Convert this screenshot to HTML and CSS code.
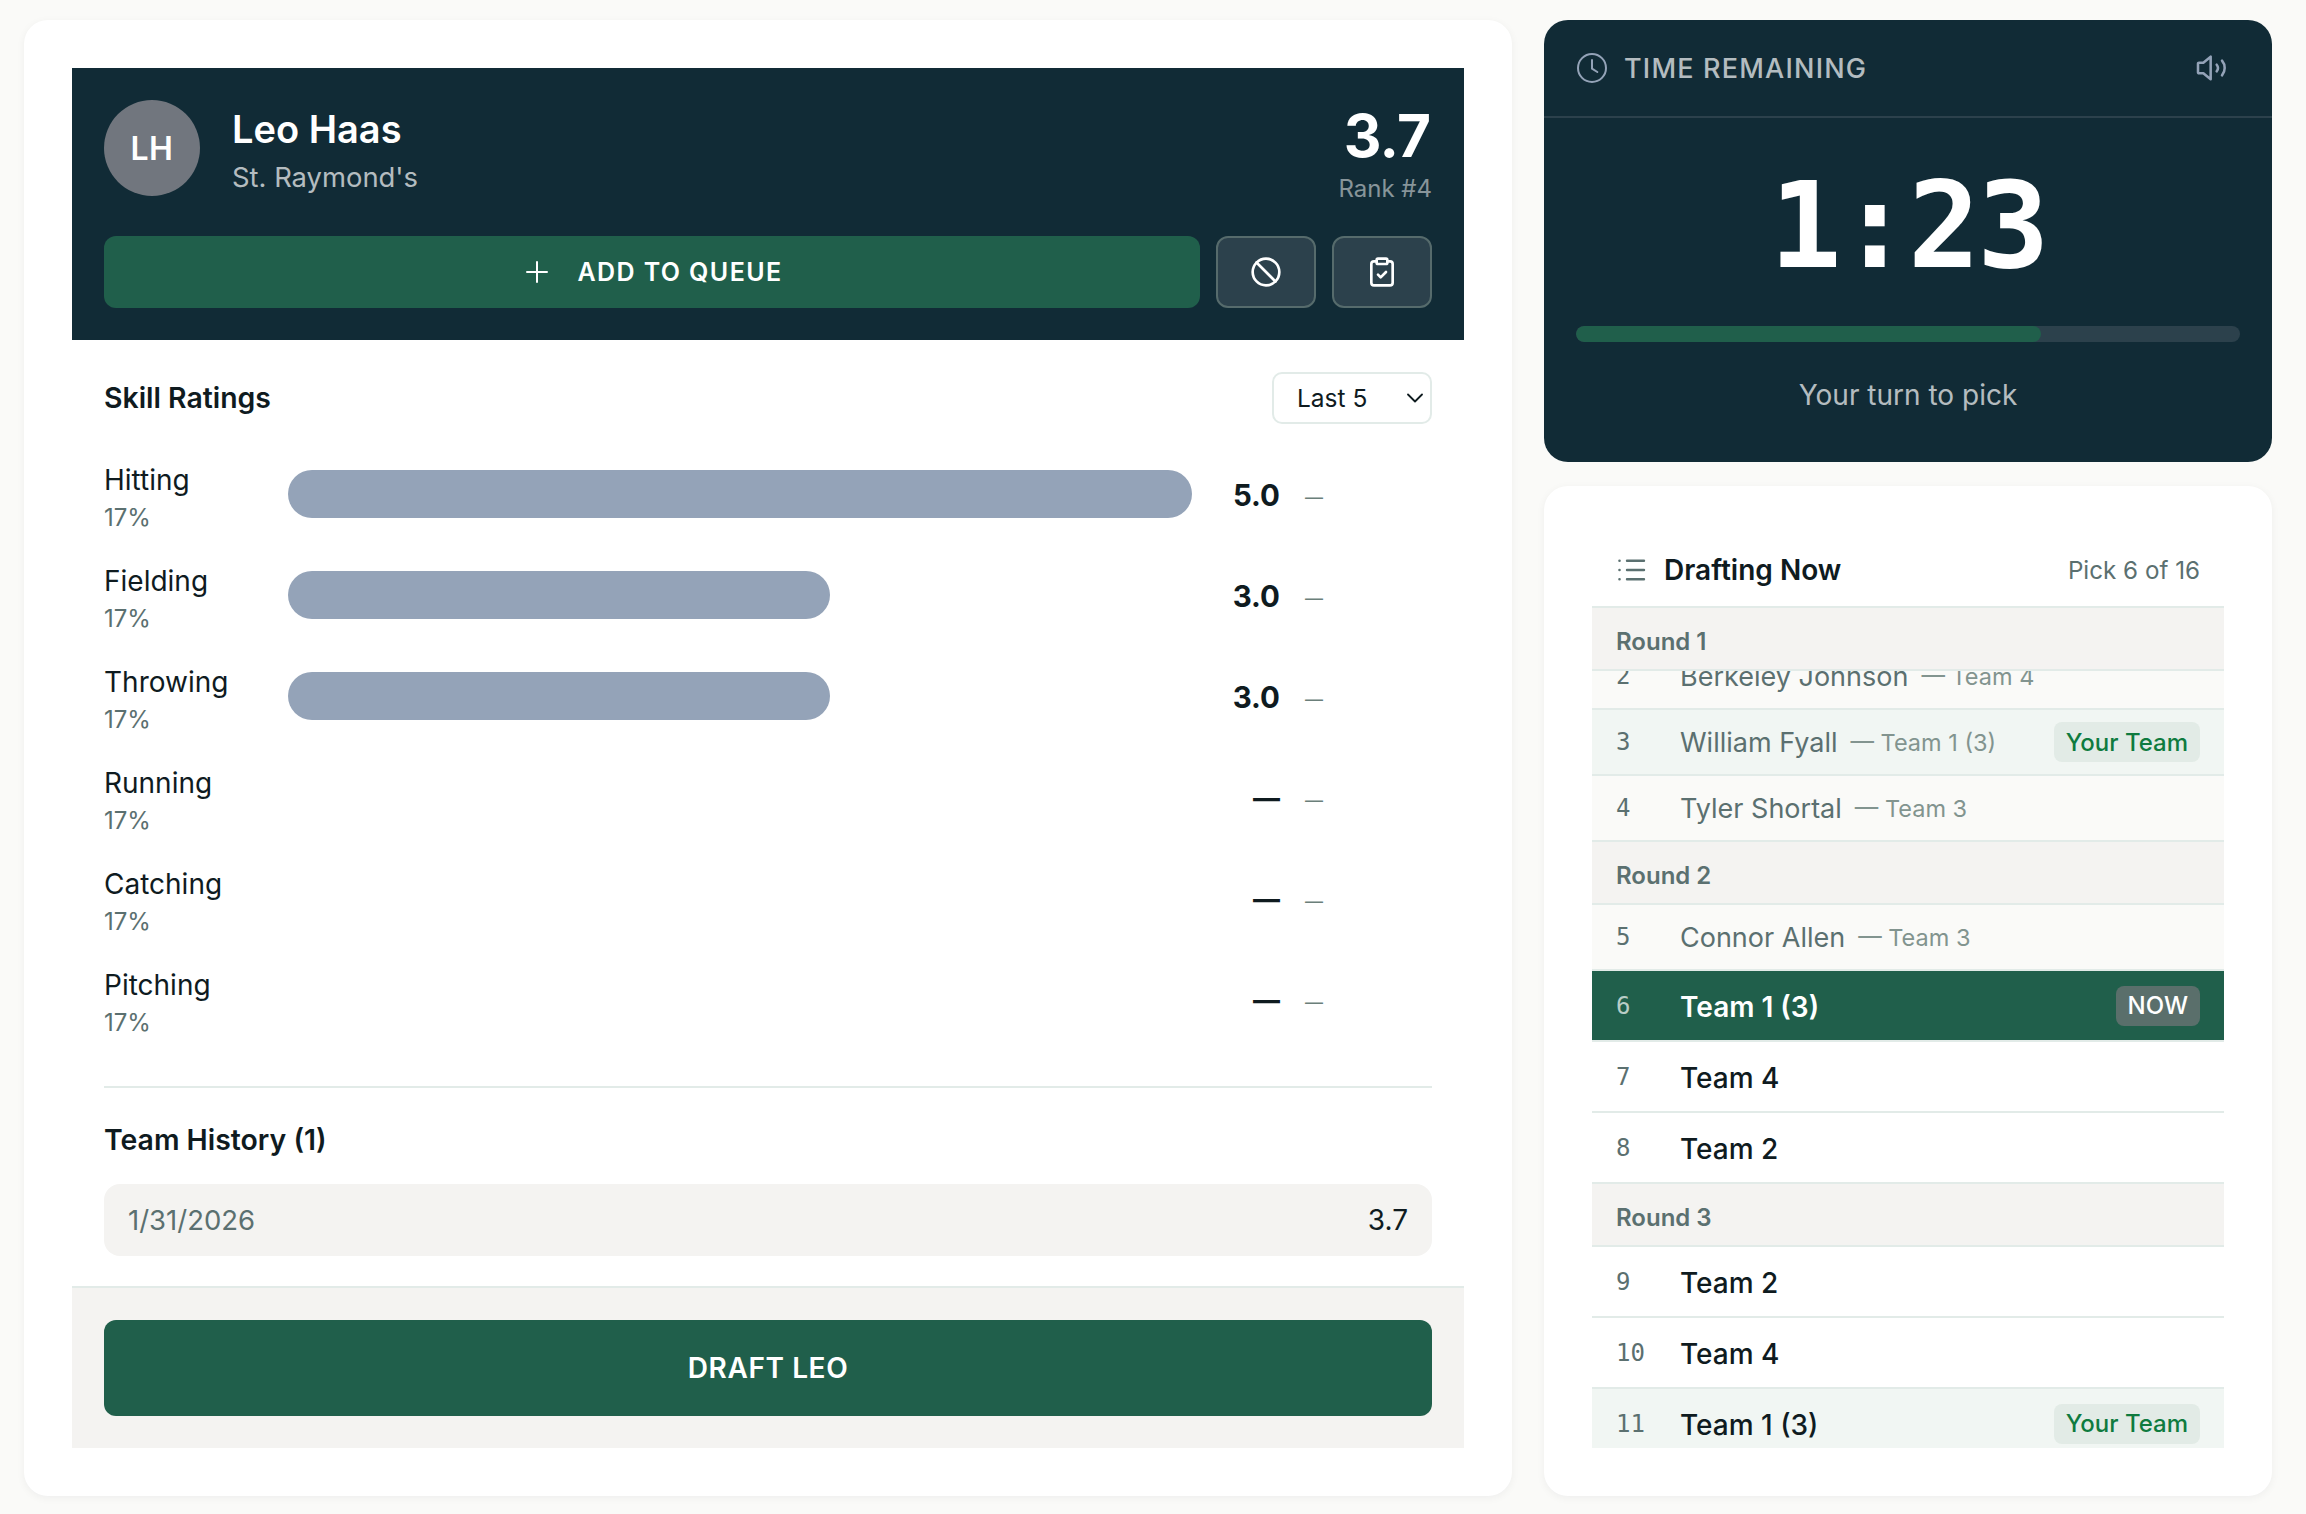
FILE: index.html
```html
<!DOCTYPE html>
<html lang="en">
<head>
<meta charset="utf-8">
<title>Draft Room</title>
<link rel="stylesheet" href="styles.css">
</head>
<body>
<main class="layout">
  <section class="card player-card">
    <header class="player-head">
      <div class="player-top">
        <div class="avatar">LH</div>
        <div class="player-id">
          <h1 class="player-name">Leo Haas</h1>
          <p class="player-school">St. Raymond's</p>
        </div>
        <div class="player-score">
          <div class="score-big">3.7</div>
          <div class="score-rank">Rank #4</div>
        </div>
      </div>
      <div class="player-actions">
        <button class="btn-queue">
          <svg class="icon-plus" viewBox="0 0 24 24" fill="none" stroke="currentColor" stroke-width="1.5" stroke-linecap="round"><path d="M12 4.500v15M4.500 12h15"/></svg>
          <span>ADD TO QUEUE</span>
        </button>
        <button class="btn-icon" aria-label="Do not draft">
          <svg class="icon-32" viewBox="0 0 24 24" fill="none" stroke="currentColor" stroke-width="2" stroke-linecap="round"><circle cx="12" cy="12" r="10"/><path d="m4.900 4.900 14.200 14.200"/></svg>
        </button>
        <button class="btn-icon" aria-label="Notes">
          <svg class="icon-32" viewBox="0 0 24 24" fill="none" stroke="currentColor" stroke-width="2" stroke-linecap="round" stroke-linejoin="round"><rect width="8" height="4" x="8" y="2" rx="1" ry="1"/><path d="M16 4h2a2 2 0 0 1 2 2v14a2 2 0 0 1-2 2H6a2 2 0 0 1-2-2V6a2 2 0 0 1 2-2h2"/><path d="m9 14 2 2 4-4"/></svg>
        </button>
      </div>
    </header>

    <div class="player-body">
      <div class="section-head">
        <h2 class="section-title">Skill Ratings</h2>
        <div class="select">
          <span>Last 5</span>
          <svg class="icon-chevron" viewBox="0 0 16 10" fill="none" stroke="currentColor" stroke-width="1.8" stroke-linecap="round" stroke-linejoin="round"><path d="M1 1.500l7 7 7-7"/></svg>
        </div>
      </div>

      <div class="skills">
        <div class="skill">
          <div class="skill-label"><div class="skill-name">Hitting</div><div class="skill-pct">17%</div></div>
          <div class="skill-track"><div class="skill-bar" style="width:100%"></div></div>
          <div class="skill-score">5.0</div>
          <div class="skill-trend">—</div>
        </div>
        <div class="skill">
          <div class="skill-label"><div class="skill-name">Fielding</div><div class="skill-pct">17%</div></div>
          <div class="skill-track"><div class="skill-bar" style="width:60%"></div></div>
          <div class="skill-score">3.0</div>
          <div class="skill-trend">—</div>
        </div>
        <div class="skill">
          <div class="skill-label"><div class="skill-name">Throwing</div><div class="skill-pct">17%</div></div>
          <div class="skill-track"><div class="skill-bar" style="width:60%"></div></div>
          <div class="skill-score">3.0</div>
          <div class="skill-trend">—</div>
        </div>
        <div class="skill">
          <div class="skill-label"><div class="skill-name">Running</div><div class="skill-pct">17%</div></div>
          <div class="skill-track"></div>
          <div class="skill-score skill-score-empty">—</div>
          <div class="skill-trend">—</div>
        </div>
        <div class="skill">
          <div class="skill-label"><div class="skill-name">Catching</div><div class="skill-pct">17%</div></div>
          <div class="skill-track"></div>
          <div class="skill-score skill-score-empty">—</div>
          <div class="skill-trend">—</div>
        </div>
        <div class="skill">
          <div class="skill-label"><div class="skill-name">Pitching</div><div class="skill-pct">17%</div></div>
          <div class="skill-track"></div>
          <div class="skill-score skill-score-empty">—</div>
          <div class="skill-trend">—</div>
        </div>
      </div>

      <div class="history">
        <h2 class="section-title">Team History (1)</h2>
        <div class="history-row">
          <span class="history-date">1/31/2026</span>
          <span class="history-val">3.7</span>
        </div>
      </div>
    </div>

    <footer class="player-foot">
      <button class="btn-draft">DRAFT LEO</button>
    </footer>
  </section>

  <aside class="side">
    <section class="timer">
      <div class="timer-head">
        <svg class="icon-clock" viewBox="0 0 24 24" fill="none" stroke="currentColor" stroke-width="1.500" stroke-linecap="round" stroke-linejoin="round"><circle cx="12" cy="12" r="10.500"/><path d="M12 6v6.500l4 2.500"/></svg>
        <span class="timer-label">TIME REMAINING</span>
        <svg class="icon-sound" viewBox="0 0 24 24" fill="none" stroke="currentColor" stroke-width="1.900" stroke-linecap="round" stroke-linejoin="round"><path d="M11 3.500v17l-5.500-4.500H2.200a.7.7 0 0 1-.7-.7V8.700a.7.7 0 0 1 .7-.7H5.500z"/><path d="M15.500 9.500a4 4 0 0 1 0 5"/><path d="M19.500 6.500a8.500 8.500 0 0 1 0 11"/></svg>
      </div>
      <div class="timer-body">
        <div class="timer-clock">1:23</div>
        <div class="timer-track"><div class="timer-fill" style="width:70%"></div></div>
        <div class="timer-note">Your turn to pick</div>
      </div>
    </section>

    <section class="card draft-card">
      <div class="draft-head">
        <svg class="icon-list" viewBox="0 0 30 24" fill="none" stroke="currentColor" stroke-width="2.400" stroke-linecap="round"><path d="M11 2.750h17M11 12h17M11 21.250h17"/><path d="M3.500 2.750h.01M3.500 12h.01M3.500 21.250h.01" stroke-width="2.600"/></svg>
        <h2 class="draft-title">Drafting Now</h2>
        <span class="draft-count">Pick 6 of 16</span>
      </div>
      <div class="draft-list">
        <div class="round">Round 1</div>
        <div class="pick pick-done pick-scrolled"><span class="pick-num">2</span><span class="pick-name">Berkeley Johnson</span><span class="pick-team">— Team 4</span></div>
        <div class="pick pick-done pick-mine"><span class="pick-num">3</span><span class="pick-name">William Fyall</span><span class="pick-team">— Team 1 (3)</span><span class="badge badge-mine">Your Team</span></div>
        <div class="pick pick-done"><span class="pick-num">4</span><span class="pick-name">Tyler Shortal</span><span class="pick-team">— Team 3</span></div>
        <div class="round">Round 2</div>
        <div class="pick pick-done"><span class="pick-num">5</span><span class="pick-name">Connor Allen</span><span class="pick-team">— Team 3</span></div>
        <div class="pick pick-next pick-now"><span class="pick-num">6</span><span class="pick-name">Team 1 (3)</span><span class="badge badge-now">NOW</span></div>
        <div class="pick pick-next"><span class="pick-num">7</span><span class="pick-name">Team 4</span></div>
        <div class="pick pick-next"><span class="pick-num">8</span><span class="pick-name">Team 2</span></div>
        <div class="round">Round 3</div>
        <div class="pick pick-next"><span class="pick-num">9</span><span class="pick-name">Team 2</span></div>
        <div class="pick pick-next"><span class="pick-num">10</span><span class="pick-name">Team 4</span></div>
        <div class="pick pick-next pick-mine"><span class="pick-num">11</span><span class="pick-name">Team 1 (3)</span><span class="badge badge-mine">Your Team</span></div>
      </div>
    </section>
  </aside>
</main>
</body>
</html>
```
FILE: styles.css
```css
* { box-sizing: border-box; }

html, body { height: 100%; }

body {
  margin: 0;
  background: #fafaf8;
  color: #0f1b1f;
  font-family: Inter, "Liberation Sans", sans-serif;
  overflow: hidden;
}

h1, h2, p { margin: 0; }

button {
  font: inherit;
  border: 0;
  color: inherit;
}

.layout {
  display: grid;
  grid-template-columns: 1488px 728px;
  column-gap: 32px;
  padding: 20px 34px 18px 24px;
  height: 1514px;
}

.card {
  background: #fff;
  border-radius: 24px;
  box-shadow: 0 2px 8px rgba(15, 27, 31, 0.05);
  padding: 48px;
}

.player-card {
  display: flex;
  flex-direction: column;
}

.player-head {
  background: #112b36;
  color: #fff;
  padding: 32px;
  display: flex;
  flex-direction: column;
  gap: 40px;
}

.player-top {
  display: flex;
  align-items: flex-start;
  gap: 32px;
  height: 96px;
}

.avatar {
  width: 96px;
  height: 96px;
  border-radius: 50%;
  background: #71767e;
  display: flex;
  align-items: center;
  justify-content: center;
  font-size: 32px;
  font-weight: 600;
  letter-spacing: 0.5px;
}

.player-id {
  flex: 1;
  padding-top: 5px;
}

.player-name {
  font-size: 38px;
  line-height: 48px;
  font-weight: 600;
}

.player-school {
  font-size: 27.400px;
  line-height: 40px;
  margin-top: 4px;
  color: rgba(255, 255, 255, 0.7);
}

.player-score {
  text-align: right;
  padding: 4px 0 0;
}

.score-big {
  font-size: 58.500px;
  line-height: 64px;
  font-weight: 700;
  letter-spacing: -0.6px;
  padding-right: 1.500px;
}

.score-rank {
  font-size: 24px;
  line-height: 36px;
  margin-top: 3px;
  color: rgba(255, 255, 255, 0.5);
}

.player-actions {
  display: flex;
  gap: 16px;
  height: 72px;
}

.btn-queue {
  flex: 1;
  background: #205f4b;
  color: #fff;
  border-radius: 12px;
  display: flex;
  align-items: center;
  justify-content: center;
  gap: 24px;
  font-size: 25px;
  font-weight: 600;
  letter-spacing: 1.4px;
}

.icon-plus { width: 32px; height: 32px; }

.btn-icon {
  width: 100px;
  background: #2c414c;
  border: 2px solid #566b6c;
  border-radius: 12px;
  color: #fff;
  display: flex;
  align-items: center;
  justify-content: center;
}

.icon-32 { width: 32px; height: 32px; }

.player-body {
  flex: 1;
  padding: 32px 32px 0;
}

.section-head {
  display: flex;
  align-items: center;
  justify-content: space-between;
  height: 52px;
}

.section-title {
  font-size: 28.400px;
  line-height: 40px;
  font-weight: 600;
}

.select {
  width: 160px;
  height: 52px;
  border: 2px solid #e2ebe8;
  border-radius: 10px;
  padding: 0 7px 0 23px;
  display: flex;
  align-items: center;
  justify-content: space-between;
  font-size: 24.500px;
}

.icon-chevron { width: 16px; height: 10px; }

.skills {
  margin-top: 34px;
  display: flex;
  flex-direction: column;
  gap: 25px;
}

.skill {
  display: grid;
  grid-template-columns: 184px 904px 88px 1fr;
  align-items: center;
  height: 76px;
}

.skill-name {
  font-size: 28px;
  line-height: 44px;
}

.skill-pct {
  font-size: 24px;
  line-height: 32px;
  color: #5b7070;
}

.skill-track { margin-bottom: 4px; }

.skill-bar {
  height: 48px;
  border-radius: 24px;
  background: #94a3b8;
}

.skill-score {
  text-align: right;
  font-size: 29.500px;
  font-weight: 700;
  line-height: 44px;
  margin-bottom: 3px;
}

.skill-score-empty {
  font-size: 27px;
  margin-bottom: 0;
}

.skill-trend {
  padding: 3px 0 0 25px;
  font-size: 18px;
  line-height: 44px;
  color: #6b7f7a;
}

.history {
  margin-top: 47px;
  border-top: 2px solid #e2ebe8;
  padding-top: 32px;
}

.history-row {
  margin-top: 24px;
  height: 72px;
  border-radius: 16px;
  background: #f4f3f1;
  padding: 0 24px;
  display: flex;
  align-items: center;
  justify-content: space-between;
  font-size: 28px;
}

.history-date {
  color: #5b7070;
  font-size: 27.500px;
}

.player-foot {
  border-top: 2px solid #e2ebe8;
  background: #f4f3f1;
  padding: 32px;
}

.btn-draft {
  display: block;
  width: 100%;
  height: 96px;
  border-radius: 12px;
  background: #205f4b;
  color: #fff;
  font-size: 28px;
  font-weight: 600;
  letter-spacing: 0.6px;
}

.side {
  display: flex;
  flex-direction: column;
  gap: 24px;
  min-height: 0;
}

.timer {
  background: #112b36;
  color: #fff;
  border-radius: 24px;
  height: 442px;
}

.timer-head {
  height: 98px;
  border-bottom: 2px solid #2c414c;
  padding: 0 44px 0 32px;
  display: flex;
  align-items: center;
  gap: 16px;
}

.icon-clock { width: 32px; height: 32px; color: #94a3b8; }

.timer-label {
  flex: 1;
  font-size: 27px;
  font-weight: 500;
  letter-spacing: 1.2px;
  color: rgba(255, 255, 255, 0.7);
}

.icon-sound { width: 32px; height: 32px; color: #94a3b8; }

.timer-body {
  padding: 36px 32px 0;
  text-align: center;
}

.timer-clock {
  font-family: "DejaVu Sans Mono", monospace;
  font-size: 120px;
  line-height: 144px;
  font-weight: 700;
  letter-spacing: -3px;
}

.timer-track {
  margin-top: 28px;
  height: 16px;
  border-radius: 8px;
  background: #2c414c;
  overflow: hidden;
}

.timer-fill {
  height: 100%;
  border-radius: 8px;
  background: #205f4b;
}

.timer-note {
  margin-top: 32px;
  font-size: 28px;
  line-height: 42px;
  color: rgba(255, 255, 255, 0.7);
}

.draft-card {
  flex: 1;
  min-height: 0;
  display: flex;
  flex-direction: column;
}

.draft-head {
  height: 74px;
  flex: none;
  border-bottom: 2px solid #e2ebe8;
  padding: 0 24px;
  display: flex;
  align-items: center;
  gap: 18px;
}

.icon-list { width: 30px; height: 24px; color: #5b7070; }

.draft-title {
  flex: 1;
  font-size: 28px;
  font-weight: 600;
}

.draft-count {
  font-size: 24.200px;
  color: #5b7070;
}

.draft-list {
  flex: 1;
  min-height: 0;
  overflow: hidden;
}

.round {
  position: relative;
  z-index: 1;
  height: 63px;
  background: #f4f3f1;
  border-bottom: 2px solid #e2ebe8;
  padding: 5px 24px 0;
  display: flex;
  align-items: center;
  font-size: 24px;
  font-weight: 600;
  color: #5b7070;
}

.pick {
  display: flex;
  align-items: center;
  padding: 0 24px;
  border-bottom: 2px solid #e2ebe8;
}

.pick-num {
  width: 64px;
  flex: none;
  font-family: "DejaVu Sans Mono", monospace;
  font-size: 24px;
  font-weight: 400;
  color: #5b7070;
}

.pick-done {
  height: 66px;
  background: #fafaf8;
  font-size: 27px;
  color: #5b7070;
}

.pick-scrolled { margin-top: -27px; }

.pick-team {
  margin-left: 13px;
  font-size: 23.500px;
  color: #82948f;
}

.pick-next {
  height: 71px;
  font-size: 28px;
  font-weight: 500;
}

.pick-next .pick-name { padding-top: 3px; }

.pick-mine { background: #f1f6f3; }

.pick-now {
  background: #205f4b;
  color: #fff;
  font-weight: 600;
}

.pick-now .pick-num { color: rgba(255, 255, 255, 0.7); }

.badge {
  margin-left: auto;
  height: 40px;
  padding: 0 12px;
  border-radius: 8px;
  display: flex;
  align-items: center;
  font-size: 24px;
  font-weight: 500;
}

.badge-mine {
  background: #e2ebe6;
  color: #0f7b3f;
}

.badge-now {
  background: #5a6f6b;
  color: #fff;
}
```
